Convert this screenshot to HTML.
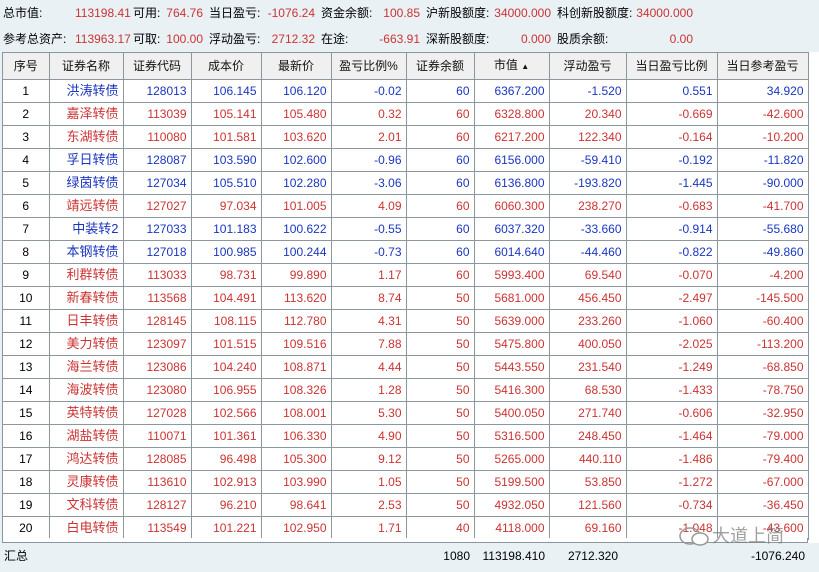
<!DOCTYPE html>
<html><head><meta charset="utf-8"><style>
*{margin:0;padding:0;box-sizing:border-box}
body{width:819px;height:572px;background:#e9f1f5;position:relative;overflow:hidden;font-family:"Liberation Sans","Noto Sans CJK SC",sans-serif;font-size:12px}
.t{position:absolute;white-space:nowrap;line-height:14px}
.r{color:#cc3333}.b{color:#1a35c0}
.wrap{position:absolute;left:2px;top:52px;width:817px;height:491px;background:#fff;border-left:1px solid #8a96a0}
table{position:absolute;left:0;top:0;border-collapse:collapse;table-layout:fixed}
td,th{height:23px;border:1px solid #8a96a0;border-left:none;text-align:right;padding:0 4px 0 0;white-space:nowrap;font-weight:normal;line-height:14px;vertical-align:middle;overflow:hidden}
th{background:#f0f0f0;text-align:center;padding:0;height:27px;font-size:12px;color:#111}
td.n{text-align:center;padding:0;color:#000}
td.m{font-size:13px;line-height:14px}
</style></head><body>
<div class="t" style="left:3px;top:6px">总市值:</div><div class="t r" style="left:75px;top:6px;width:52px;text-align:right">113198.41</div>
<div class="t" style="left:133px;top:6px">可用:</div><div class="t r" style="left:160px;top:6px;width:43px;text-align:right">764.76</div>
<div class="t" style="left:209px;top:6px">当日盈亏:</div><div class="t r" style="left:260px;top:6px;width:55px;text-align:right">-1076.24</div>
<div class="t" style="left:321px;top:6px">资金余额:</div><div class="t r" style="left:370px;top:6px;width:50px;text-align:right">100.85</div>
<div class="t" style="left:426px;top:6px">沪新股额度:</div><div class="t r" style="left:490px;top:6px;width:61px;text-align:right">34000.000</div>
<div class="t" style="left:557px;top:6px">科创新股额度:</div><div class="t r" style="left:630px;top:6px;width:63px;text-align:right">34000.000</div>

<div class="t" style="left:3px;top:32px">参考总资产:</div><div class="t r" style="left:75px;top:32px;width:52px;text-align:right">113963.17</div>
<div class="t" style="left:133px;top:32px">可取:</div><div class="t r" style="left:160px;top:32px;width:43px;text-align:right">100.00</div>
<div class="t" style="left:209px;top:32px">浮动盈亏:</div><div class="t r" style="left:260px;top:32px;width:55px;text-align:right">2712.32</div>
<div class="t" style="left:321px;top:32px">在途:</div><div class="t r" style="left:370px;top:32px;width:50px;text-align:right">-663.91</div>
<div class="t" style="left:426px;top:32px">深新股额度:</div><div class="t r" style="left:490px;top:32px;width:61px;text-align:right">0.000</div>
<div class="t" style="left:557px;top:32px">股质余额:</div><div class="t r" style="left:630px;top:32px;width:63px;text-align:right">0.00</div>

<div class="wrap"><table>
<colgroup><col style="width:46px"><col style="width:74px"><col style="width:68px"><col style="width:70px"><col style="width:70px"><col style="width:75px"><col style="width:68px"><col style="width:75px"><col style="width:77px"><col style="width:91px"><col style="width:91px"></colgroup>
<tr><th>序号</th><th>证券名称</th><th>证券代码</th><th>成本价</th><th>最新价</th><th>盈亏比例%</th><th>证券余额</th><th>市值 <span style="font-size:8px">▲</span></th><th>浮动盈亏</th><th>当日盈亏比例</th><th>当日参考盈亏</th></tr>
<tbody id="tb"></tbody>
</table></div>
<script>
var d=[
"洪涛转债 128013 106.145 106.120 -0.02 60 6367.200 -1.520 0.551 34.920 b",
"嘉泽转债 113039 105.141 105.480 0.32 60 6328.800 20.340 -0.669 -42.600 r",
"东湖转债 110080 101.581 103.620 2.01 60 6217.200 122.340 -0.164 -10.200 r",
"孚日转债 128087 103.590 102.600 -0.96 60 6156.000 -59.410 -0.192 -11.820 b",
"绿茵转债 127034 105.510 102.280 -3.06 60 6136.800 -193.820 -1.445 -90.000 b",
"靖远转债 127027 97.034 101.005 4.09 60 6060.300 238.270 -0.683 -41.700 r",
"中装转2 127033 101.183 100.622 -0.55 60 6037.320 -33.660 -0.914 -55.680 b",
"本钢转债 127018 100.985 100.244 -0.73 60 6014.640 -44.460 -0.822 -49.860 b",
"利群转债 113033 98.731 99.890 1.17 60 5993.400 69.540 -0.070 -4.200 r",
"新春转债 113568 104.491 113.620 8.74 50 5681.000 456.450 -2.497 -145.500 r",
"日丰转债 128145 108.115 112.780 4.31 50 5639.000 233.260 -1.060 -60.400 r",
"美力转债 123097 101.515 109.516 7.88 50 5475.800 400.050 -2.025 -113.200 r",
"海兰转债 123086 104.240 108.871 4.44 50 5443.550 231.540 -1.249 -68.850 r",
"海波转债 123080 106.955 108.326 1.28 50 5416.300 68.530 -1.433 -78.750 r",
"英特转债 127028 102.566 108.001 5.30 50 5400.050 271.740 -0.606 -32.950 r",
"湖盐转债 110071 101.361 106.330 4.90 50 5316.500 248.450 -1.464 -79.000 r",
"鸿达转债 128085 96.498 105.300 9.12 50 5265.000 440.110 -1.486 -79.400 r",
"灵康转债 113610 102.913 103.990 1.05 50 5199.500 53.850 -1.272 -67.000 r",
"文科转债 128127 96.210 98.641 2.53 50 4932.050 121.560 -0.734 -36.450 r",
"白电转债 113549 101.221 102.950 1.71 40 4118.000 69.160 -1.048 -43.600 r"];
var h="";d.forEach(function(s,i){var a=s.split(" "),c=a[10];h+='<tr class="'+c+'"><td class="n">'+(i+1)+'</td><td class="m">'+a[0]+'</td>';for(var j=1;j<10;j++)h+='<td>'+a[j]+'</td>';h+='</tr>';});
document.getElementById("tb").innerHTML=h;
</script>
<div style="position:absolute;left:2px;top:538px;width:806px;height:5px;border-bottom:1px solid #8a96a0;border-left:1px solid #8a96a0;border-right:1px solid #8a96a0;background:#fff"></div>
<div class="t" style="left:4px;top:549px">汇总</div>
<div class="t" style="left:420px;top:549px;width:50px;text-align:right">1080</div>
<div class="t" style="left:475px;top:549px;width:70px;text-align:right">113198.410</div>
<div class="t" style="left:550px;top:549px;width:68px;text-align:right">2712.320</div>
<div class="t" style="left:720px;top:549px;width:85px;text-align:right">-1076.240</div>
<svg style="position:absolute;left:678px;top:526px" width="34" height="22"><ellipse cx="12" cy="10" rx="10" ry="8" fill="none" stroke="#999" stroke-width="1.5"/><ellipse cx="22" cy="13" rx="8" ry="6" fill="#fff" stroke="#999" stroke-width="1.5"/></svg>
<div class="t" style="left:712px;top:526px;font-size:18px;line-height:20px;color:rgba(120,120,120,0.7)">大道上简</div>
</body></html>
